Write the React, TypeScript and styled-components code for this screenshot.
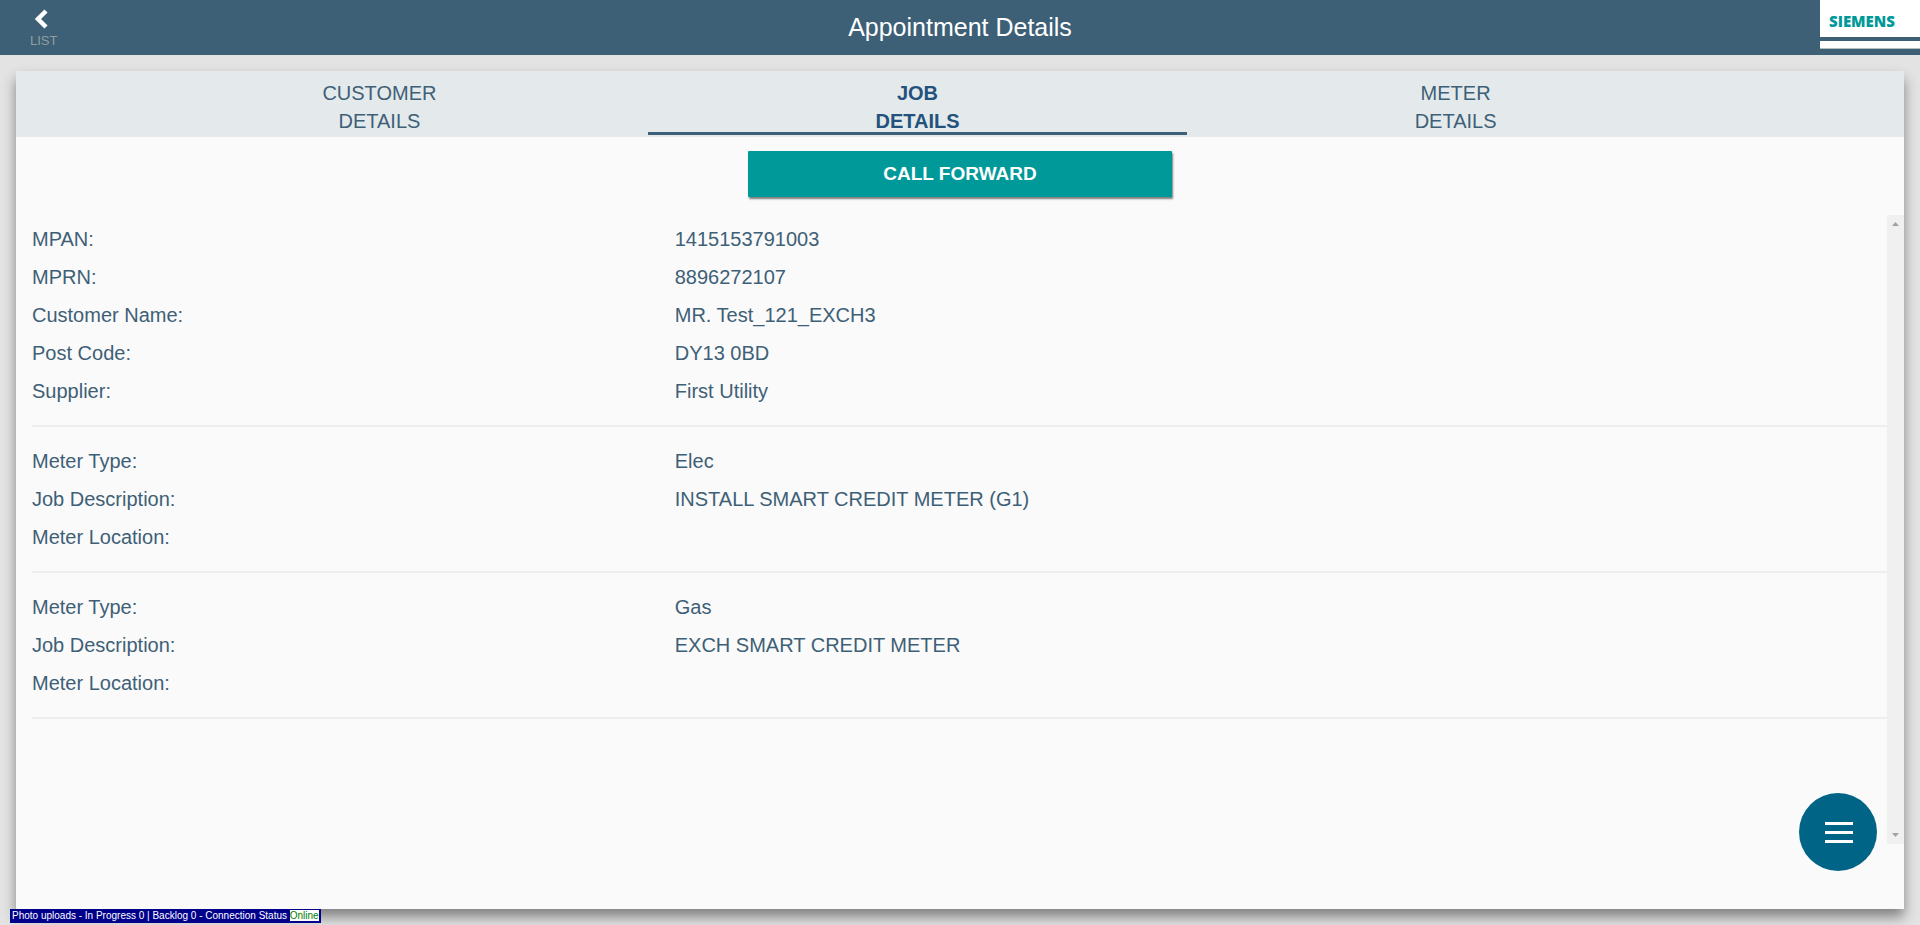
import React from 'react';
import styled, { createGlobalStyle } from 'styled-components';

const GlobalStyle = createGlobalStyle`
  * { box-sizing: border-box; }
  body {
    margin: 0;
    background: #e3e3e3;
    color: #3e6077;
    font-family: "Liberation Sans", Arial, Helvetica, sans-serif;
    font-size: 20px;
  }
  button { font-family: inherit; border: 0; cursor: pointer; }
`;

const Page = styled.div`
  display: flex;
  flex-direction: column;
  min-height: 100vh;
`;

const Header = styled.header`
  display: grid;
  grid-template-columns: 1fr auto 1fr;
  height: 55px;
  background: #3e6077;
  color: #fff;
`;

const BackButton = styled.button`
  display: flex;
  flex-direction: column;
  align-items: flex-start;
  justify-self: start;
  gap: 4px;
  padding: 8px 0 0 30px;
  background: none;
  color: #8f9e9f;
  font-size: 13px;
  line-height: 16px;
  svg { margin-left: 4px; }
`;

const Title = styled.h1`
  margin: 0;
  font-size: 25px;
  font-weight: 400;
  line-height: 55px;
`;

const Brand = styled.div`
  justify-self: end;
  width: 100px;
`;

const BrandName = styled.div`
  height: 37px;
  padding-left: 9px;
  background: #fff;
  color: #009999;
  font-family: "Open Sans", "Noto Sans", sans-serif;
  font-size: 15px;
  font-weight: 800;
  line-height: 42px;
`;

const BrandStripe = styled.div`
  height: 8px;
  margin-top: 4px;
  background: #fff;
  border-bottom: 1px solid #b4bfc0;
`;

const Card = styled.main`
  display: flex;
  flex-direction: column;
  flex: 1;
  margin: 16px 16px 0;
  background: #fafafa;
  box-shadow: 0 8px 12px rgba(0, 0, 0, 0.43);
`;

const Tabs = styled.nav`
  display: flex;
  padding: 0 9.5% 2px 5%;
  background: #e4eaec;
`;

const Tab = styled.button<{ $active?: boolean }>`
  flex: 1;
  height: 64px;
  padding: 8px 0 0;
  background: none;
  color: ${(p) => (p.$active ? '#23527c' : '#3e6077')};
  box-shadow: ${(p) => (p.$active ? 'inset 0 -3px #3e6077' : 'none')};
  font-size: 20px;
  font-weight: ${(p) => (p.$active ? 700 : 400)};
  line-height: 28px;
  span { display: block; }
`;

const CallForward = styled.button`
  align-self: center;
  width: 22.5%;
  height: 46px;
  margin: 14px 0 18px;
  border-radius: 1px;
  background: #009999;
  color: #fff;
  box-shadow: 1px 2px 2px rgba(0, 0, 0, 0.5);
  font-size: 19px;
  font-weight: 700;
`;

const ScrollArea = styled.div`
  display: flex;
  flex: 1;
`;

const Details = styled.div`
  flex: 1;
  padding: 5px 0 0 16px;
`;

const Group = styled.dl`
  margin: 0 0 15px;
  padding-bottom: 15px;
  border-bottom: 2px solid #eee;
`;

const Row = styled.div`
  display: grid;
  grid-template-columns: 34.65% 1fr;
  line-height: 38px;
  dt, dd { margin: 0; }
`;

const ScrollTrack = styled.div`
  display: flex;
  flex-direction: column;
  justify-content: space-between;
  align-items: center;
  width: 17px;
  padding: 7px 0;
  background: #f0f0f0;
`;

const CardFooter = styled.div`
  height: 65px;
`;

const MenuButton = styled.button`
  position: fixed;
  right: 43px;
  bottom: 54px;
  display: grid;
  place-items: center;
  width: 78px;
  height: 78px;
  padding: 0;
  border-radius: 50%;
  background: #006487;
`;

const StatusBar = styled.footer`
  align-self: flex-start;
  position: relative;
  height: 14px;
  margin: 0 0 2px 10px;
  padding: 1px 2px;
  background: #00008b;
  color: #fff;
  font-size: 10px;
  line-height: 12px;
`;

const Online = styled.span`
  display: inline-block;
  height: 11px;
  background: #fff;
  color: green;
`;

const tabs = [
  ['CUSTOMER', 'DETAILS'],
  ['JOB', 'DETAILS'],
  ['METER', 'DETAILS'],
];

const groups = [
  [
    ['MPAN:', '1415153791003'],
    ['MPRN:', '8896272107'],
    ['Customer Name:', 'MR. Test_121_EXCH3'],
    ['Post Code:', 'DY13 0BD'],
    ['Supplier:', 'First Utility'],
  ],
  [
    ['Meter Type:', 'Elec'],
    ['Job Description:', 'INSTALL SMART CREDIT METER (G1)'],
    ['Meter Location:', ''],
  ],
  [
    ['Meter Type:', 'Gas'],
    ['Job Description:', 'EXCH SMART CREDIT METER'],
    ['Meter Location:', ''],
  ],
];

export default function App() {
  return (
    <Page>
      <GlobalStyle />
      <Header>
        <BackButton>
          <svg width="14" height="21" viewBox="0 0 14 21" aria-hidden="true">
            <path d="M12 3 L4 11 L12 19" fill="none" stroke="#fff" strokeWidth="4.500" />
          </svg>
          LIST
        </BackButton>
        <Title>Appointment Details</Title>
        <Brand>
          <BrandName>SIEMENS</BrandName>
          <BrandStripe />
        </Brand>
      </Header>
      <Card>
        <Tabs>
          {tabs.map(([first, second], i) => (
            <Tab key={first} $active={i === 1}>
              <span>{first}</span>
              <span>{second}</span>
            </Tab>
          ))}
        </Tabs>
        <CallForward>CALL FORWARD</CallForward>
        <ScrollArea>
          <Details>
            {groups.map((rows, i) => (
              <Group key={i}>
                {rows.map(([label, value]) => (
                  <Row key={label}>
                    <dt>{label}</dt>
                    <dd>{value}</dd>
                  </Row>
                ))}
              </Group>
            ))}
          </Details>
          <ScrollTrack aria-hidden="true">
            <svg width="7" height="4" viewBox="0 0 7 4"><path d="M0 4 L3.500 0 L7 4 Z" fill="#a3a3a3" /></svg>
            <svg width="7" height="4" viewBox="0 0 7 4"><path d="M0 0 L3.500 4 L7 0 Z" fill="#a3a3a3" /></svg>
          </ScrollTrack>
        </ScrollArea>
        <CardFooter />
      </Card>
      <StatusBar>
        Photo uploads - In Progress 0 | Backlog 0 - Connection Status <Online>Online</Online>
      </StatusBar>
      <MenuButton aria-label="Menu">
        <svg width="30" height="22" viewBox="0 0 30 22" aria-hidden="true">
          <path d="M2 2.500H30M2 11.500H30M2 20.500H30" stroke="#fff" strokeWidth="3" />
        </svg>
      </MenuButton>
    </Page>
  );
}
